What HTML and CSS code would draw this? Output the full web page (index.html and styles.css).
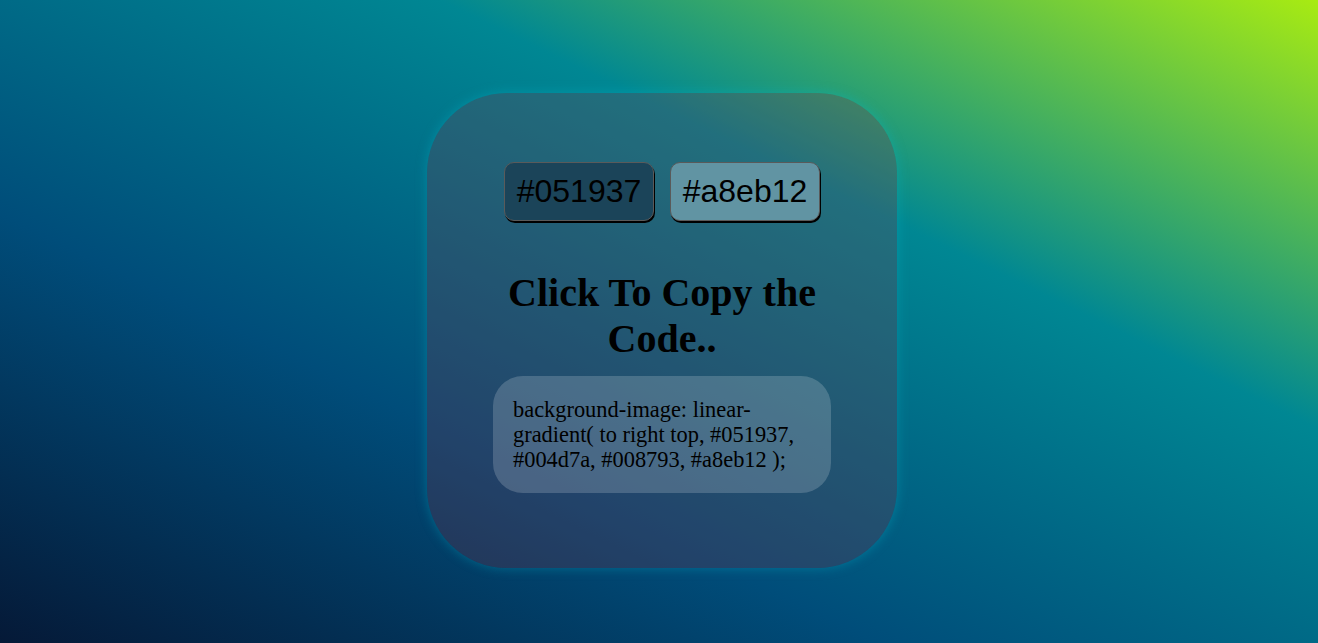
FILE: index.html
```html
<!DOCTYPE html>
<html lang="en">
<head>
<meta charset="UTF-8">
<title>Gradient</title>
<link rel="stylesheet" href="styles.css">
</head>
<body>
  <div class="card">
    <div class="swatches">
      <div class="swatch swatch-dark">#051937</div>
      <div class="swatch swatch-light">#a8eb12</div>
    </div>
    <h1 class="title">Click To Copy the Code..</h1>
    <div class="code">background-image: linear-gradient( to right top, #051937, #004d7a, #008793, #a8eb12 );</div>
  </div>
</body>
</html>
```

FILE: styles.css
```css
html, body {
  margin: 0;
  height: 100%;
}
body {
  min-height: 643px;
  box-sizing: border-box;
  padding: 93px 0 0 6px;
  background-image: linear-gradient(to right top, #051937, #004d7a, #008793, #a8eb12);
  font-family: "Liberation Serif", "Times New Roman", serif;
  overflow: hidden;
}
.card {
  width: 470px;
  height: 475px;
  margin: 0 auto;
  box-sizing: border-box;
  padding: 69px 66px 0;
  border-radius: 80px;
  background: rgba(134, 38, 61, 0.25);
  box-shadow: 0 0 12px rgba(0, 190, 210, 0.35);
  display: flex;
  flex-direction: column;
  align-items: center;
}
.swatches {
  display: flex;
  gap: 16px;
}
.swatch {
  width: 150px;
  height: 59px;
  box-sizing: border-box;
  border: 1px solid #5a5a5a;
  border-radius: 10px;
  box-shadow: 1px 2px 0 #000;
  font-family: "Liberation Sans", Arial, sans-serif;
  font-size: 32px;
  color: #000;
  display: flex;
  align-items: center;
  justify-content: center;
}
.swatch-dark {
  background: #1b4459;
}
.swatch-light {
  background: #6194a3;
}
.title {
  margin: 49px 0 14px;
  font-size: 40px;
  line-height: 46px;
  font-weight: bold;
  text-align: center;
  color: #000;
}
.code {
  width: 338px;
  box-sizing: border-box;
  padding: 21px 20px;
  border-radius: 30px;
  background: rgba(255, 255, 255, 0.18);
  font-size: 22.4px;
  line-height: 25px;
  color: #000;
}
```
